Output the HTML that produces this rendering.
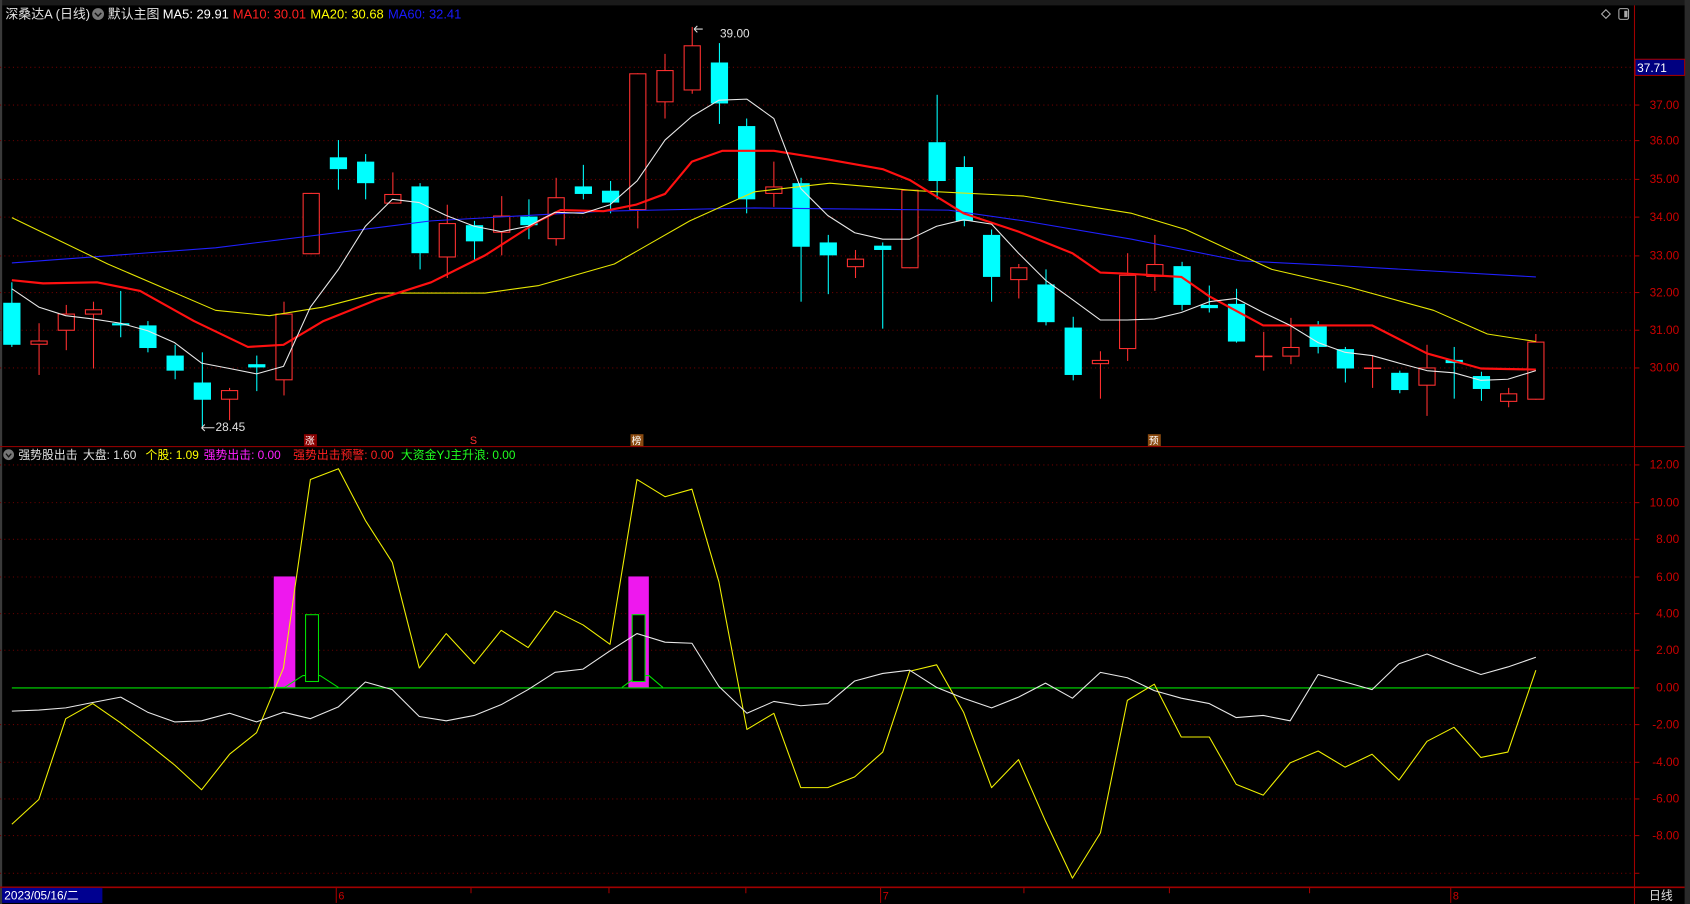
<!DOCTYPE html>
<html><head><meta charset="utf-8"><style>
html,body{margin:0;padding:0;background:#000;overflow:hidden}
svg{display:block}
text{font-family:"Liberation Sans","Noto Sans CJK SC",sans-serif}
</style></head><body>
<svg id="s" width="1690" height="904" viewBox="0 0 1568 839" preserveAspectRatio="none" xmlns="http://www.w3.org/2000/svg">
<rect width="1568" height="839" fill="#000"/>
<rect x="0" y="0" width="1568" height="5" fill="#1a1a1a"/>
<rect x="0" y="0" width="2" height="839" fill="#3a3a3a"/>
<rect x="1563" y="0" width="5" height="839" fill="#2a2a2a"/>
<g id="grid"></g>
<line x1="1516.5" y1="5" x2="1516.5" y2="823" stroke="#a00000" stroke-width="1"/>
<line x1="0" y1="414.5" x2="1563" y2="414.5" stroke="#a00000" stroke-width="1"/>
<line x1="0" y1="823.5" x2="1563" y2="823.5" stroke="#a00000" stroke-width="1.5"/>
<g id="main"></g>
<g id="sub"></g>
<!-- header -->
<text x="5" y="17" font-size="12" fill="#e0e0e0">深桑达A (日线)</text>
<circle cx="91" cy="13" r="5.5" fill="#777"/><path d="M88 12 L91 15 L94 12" stroke="#111" stroke-width="1.3" fill="none"/>
<text x="100" y="17" font-size="12" fill="#e0e0e0">默认主图</text>
<text x="151" y="17" font-size="12" fill="#ffffff">MA5: 29.91</text>
<text x="216" y="17" font-size="12" fill="#ff2020">MA10: 30.01</text>
<text x="288" y="17" font-size="12" fill="#ffff00">MA20: 30.68</text>
<text x="360" y="17" font-size="12" fill="#1a1aff">MA60: 32.41</text>
<path d="M1490 9 L1494 13 L1490 17 L1486 13 Z" stroke="#aaa" fill="none"/>
<rect x="1502" y="8" width="9" height="10" rx="1.5" stroke="#aaa" fill="none"/><rect x="1507" y="10" width="3" height="6" fill="#aaa"/>
<circle cx="8" cy="422" r="5" fill="#777"/><path d="M5.5 421 L8 424 L10.5 421" stroke="#111" stroke-width="1.2" fill="none"/>
<text x="17" y="426" font-size="11" fill="#e0e0e0">强势股出击</text>
<text x="77" y="426" font-size="11" fill="#e0e0e0">大盘: 1.60</text>
<text x="135" y="426" font-size="11" fill="#ffff00">个股: 1.09</text>
<text x="189" y="426" font-size="11" fill="#ff20ff">强势出击: 0.00</text>
<text x="272" y="426" font-size="11" fill="#ff2020">强势出击预警: 0.00</text>
<text x="372" y="426" font-size="11" fill="#20ff20">大资金YJ主升浪: 0.00</text>
<!-- price labels -->
<g font-size="11" fill="#cc0000" text-anchor="end">
<text x="1558" y="101">37.00</text><text x="1558" y="134">36.00</text><text x="1558" y="170">35.00</text><text x="1558" y="205">34.00</text><text x="1558" y="241">33.00</text><text x="1558" y="275">32.00</text><text x="1558" y="310">31.00</text><text x="1558" y="345">30.00</text>
<text x="1558" y="435">12.00</text><text x="1558" y="470">10.00</text><text x="1558" y="504">8.00</text><text x="1558" y="539">6.00</text><text x="1558" y="573">4.00</text><text x="1558" y="607">2.00</text><text x="1558" y="642">0.00</text><text x="1558" y="676">-2.00</text><text x="1558" y="711">-4.00</text><text x="1558" y="745">-6.00</text><text x="1558" y="779">-8.00</text>
</g>
<rect x="1517" y="55" width="46" height="15" fill="#000080" stroke="#a00000"/>
<text x="1519" y="67" font-size="11" fill="#fff">37.71</text>
<text x="668" y="35" font-size="11" fill="#e0e0e0">39.00</text>
<path d="M644 27 L652 27 M644 27 L647 24 M644 27 L647 30" stroke="#ddd" fill="none"/>
<text x="200" y="400" font-size="11" fill="#e0e0e0">28.45</text>
<path d="M187 397 L199 397 M187 397 L190 394 M187 397 L190 400" stroke="#ddd" fill="none"/>
<!-- markers -->
<rect x="282" y="403" width="12" height="11" fill="#8a0000"/><text x="283" y="412" font-size="9" fill="#fff">涨</text>
<text x="436" y="412" font-size="10" fill="#ff3030">S</text>
<rect x="585" y="403" width="12" height="11" fill="#8a4a10"/><text x="586" y="412" font-size="9" fill="#fff">榜</text>
<rect x="1065" y="403" width="12" height="11" fill="#8a4a10"/><text x="1066" y="412" font-size="9" fill="#fff">预</text>
<!-- bottom axis -->
<rect x="2" y="824" width="93" height="14" fill="#000090"/>
<text x="4" y="835" font-size="11" fill="#fff">2023/05/16/二</text>
<g font-size="10" fill="#cc0000"><text x="314" y="835">6</text><text x="819" y="835">7</text><text x="1348" y="835">8</text></g>
<g stroke="#a00000"><line x1="312" y1="824" x2="312" y2="838"/><line x1="437" y1="824" x2="437" y2="829"/><line x1="565" y1="824" x2="565" y2="829"/><line x1="692" y1="824" x2="692" y2="829"/><line x1="817" y1="824" x2="817" y2="838"/><line x1="950" y1="824" x2="950" y2="829"/><line x1="1085" y1="824" x2="1085" y2="829"/><line x1="1215" y1="824" x2="1215" y2="829"/><line x1="1346" y1="824" x2="1346" y2="838"/></g>
<line x1="1516.5" y1="824" x2="1516.5" y2="839" stroke="#a00000"/>
<text x="1530" y="835" font-size="11" fill="#e0e0e0">日线</text>
</svg>
<script>
const NS="http://www.w3.org/2000/svg";
function el(p,t,a){const e=document.createElementNS(NS,t);for(const k in a)e.setAttribute(k,a[k]);p.appendChild(e);return e;}
const grid=document.getElementById('grid');
[62,97,130,166,201,237,271,306,341,431,466,500,535,569,603,672,707,741,775,810].forEach(y=>el(grid,'line',{x1:0,y1:y+.5,x2:1516,y2:y+.5,stroke:'#6a0000','stroke-dasharray':'1 3'}));
[62,97,130,166,201,237,271,306,341,431,466,500,535,569,603,638,672,707,741,775,810].forEach(y=>el(grid,'line',{x1:1516,y1:y+.5,x2:1521,y2:y+.5,stroke:'#a00000'}));
const C=[
['c',281,320,262,322],['r',316,320,300,348],['r',291,307,283,325],['r',287,292,280,342],['c',300,302,270,313],['c',302,323,298,327],['c',330,344,320,352],['c',355,371,327,398],['r',362,371,360,390],['c',338,341,330,363],
['r',291,353,280,367],['r',179,236,179,236],['c',146,157,130,176],['c',150,170,143,185],['r',180,189,160,189],['c',173,235,170,250],['r',207,239,190,258],['c',209,224,205,242],['r',200,216,182,237],['c',201,209,185,222],
['r',183,222,165,228],['c',173,180,153,185],['c',177,188,168,198],['r',68,195,68,212],['r',65,95,50,110],['r',42,84,25,87],['c',58,96,40,115],['c',117,185,110,198],['r',173,180,150,192],['c',170,229,165,280],
['c',225,237,218,273],['r',240,248,232,258],['c',228,232,225,305],['r',176,249,176,249],['c',132,168,88,185],['c',155,205,145,210],['c',218,257,213,280],['r',248,260,245,277],['c',264,299,250,302],['c',304,348,294,353],
['r',334,338,326,370],['r',255,324,235,335],['r',245,257,218,270],['c',247,283,243,288],['c',283,286,265,290],['c',282,317,268,318],['r',330,331,308,344],['r',322,331,295,338],['c',302,322,298,328],['c',324,342,322,355],
['r',341,342,330,360],['c',346,362,344,365],['r',341,358,320,386],['c',334,337,322,370],['c',349,361,345,372],['r',365,373,360,378],['r',317,371,310,371]];
const X=i=>11+i*25.25;
const m=document.getElementById('main');
C.forEach((c,i)=>{const x=X(i);const col=c[0]=='c'?'#00ffff':'#ff3030';
el(m,'line',{x1:x,y1:c[3],x2:x,y2:c[4],stroke:col});
const h=Math.max(1,c[2]-c[1]);
if(c[0]=='c')el(m,'rect',{x:x-8,y:c[1],width:16,height:h,fill:col});
else el(m,'rect',{x:x-7.5,y:c[1]+.5,width:15,height:Math.max(0.5,h-1),fill:'#000',stroke:col});});
function pl(g,pts,col,w){el(g,'polyline',{points:pts,fill:'none',stroke:col,'stroke-width':w,'stroke-linejoin':'round'});}
pl(m,"11,244 200,230 400,205 560,196 700,193 880,195 950,205 1050,222 1150,242 1250,247 1425,257",'#2020ff',1);
pl(m,"11,202 100,245 200,288 250,293 300,285 350,272 450,272 500,265 570,245 640,205 700,178 770,170 850,177 950,182 1050,198 1100,213 1180,250 1250,266 1330,288 1380,310 1425,317",'#e6e600',1);
pl(m,"11,260 40,263 90,262 130,270 180,298 230,322 263,320 300,298 350,278 400,262 450,237 500,205 520,195 560,196 590,190 617,180 642,150 670,140 718,140 768,148 819,157 844,167 894,198 945,215 995,235 1021,253 1046,254 1096,257 1122,275 1172,302 1273,302 1324,328 1374,342 1425,343",'#ff1010',2);
pl(m,"11,268 36,285 61,293 86,296 112,300 137,307 162,318 187,337 213,342 238,347 263,340 288,285 314,250 339,210 364,185 389,188 414,200 440,210 465,215 490,210 515,197 541,198 566,190 591,168 617,130 642,108 667,93 693,92 718,110 743,175 768,200 793,216 819,222 844,222 869,210 894,204 920,208 945,235 970,260 995,278 1021,297 1046,297 1071,296 1096,290 1122,280 1147,277 1172,290 1197,302 1223,318 1248,327 1273,330 1298,337 1324,344 1349,346 1374,353 1399,352 1425,344",'#e8e8e8',1);
const s=document.getElementById('sub');
el(s,'rect',{x:254,y:535,width:20,height:103,fill:'#ee18ee'});
el(s,'rect',{x:583,y:535,width:19,height:103,fill:'#ee18ee'});
pl(s,"250,638 264,638 281,627 297,627 314,638",'#00e000',1);
pl(s,"577,638 592,627 602,627 615,638",'#00e000',1);
el(s,'line',{x1:11,y1:638.5,x2:1516,y2:638.5,stroke:'#00e000'});
el(s,'rect',{x:283.5,y:570.5,width:12,height:62,fill:'#000',stroke:'#00e000'});
el(s,'rect',{x:586.5,y:570.5,width:12,height:62,fill:'#000',stroke:'#00e000'});
pl(s,"11,765 36,742 61,667 86,653 112,671 137,690 162,710 187,733 213,700 238,680 263,620 288,445 314,435 339,483 364,522 389,620 414,588 440,616 465,585 490,601 515,567 541,580 566,598 591,445 617,461 642,454 667,540 693,677 718,662 743,731 768,731 793,721 819,698 844,623 869,617 894,661 920,731 945,705 970,762 995,815 1021,773 1046,650 1071,635 1096,684 1122,684 1147,728 1172,738 1197,708 1223,697 1248,712 1273,700 1298,724 1324,688 1349,675 1374,703 1399,698 1425,622",'#f0f000',1);
pl(s,"11,660 36,659 61,657 86,652 112,647 137,661 162,670 187,669 213,662 238,670 263,661 288,667 314,656 339,633 364,640 389,665 414,669 440,664 465,654 490,640 515,624 541,621 566,604 591,588 617,596 642,597 667,637 693,662 718,651 743,655 768,653 793,632 819,625 844,622 869,638 894,648 920,657 945,647 970,634 995,648 1021,624 1046,629 1071,641 1096,648 1122,653 1147,666 1172,664 1197,669 1223,626 1248,633 1273,640 1298,616 1324,607 1349,617 1374,626 1399,619 1425,610",'#e8e8e8',1);
</script>
</body></html>
